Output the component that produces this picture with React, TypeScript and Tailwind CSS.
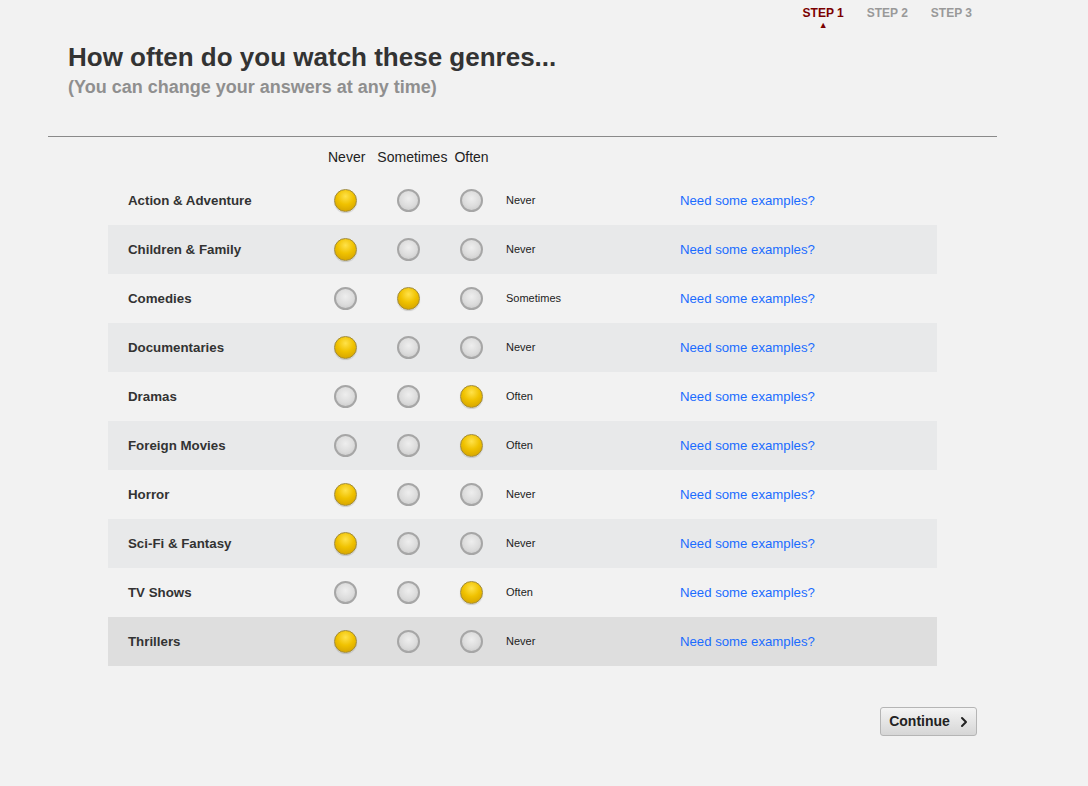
import { ChevronRight } from "lucide-react";

type Level = "Never" | "Sometimes" | "Often";

const genres: { name: string; level: Level }[] = [
	{ name: "Action & Adventure", level: "Never" },
	{ name: "Children & Family", level: "Never" },
	{ name: "Comedies", level: "Sometimes" },
	{ name: "Documentaries", level: "Never" },
	{ name: "Dramas", level: "Often" },
	{ name: "Foreign Movies", level: "Often" },
	{ name: "Horror", level: "Never" },
	{ name: "Sci-Fi & Fantasy", level: "Never" },
	{ name: "TV Shows", level: "Often" },
	{ name: "Thrillers", level: "Never" },
];

const levels: Level[] = ["Never", "Sometimes", "Often"];

function Radio({ on }: { on: boolean }) {
	return on ? (
		<span className="block h-[23px] w-[23px] rounded-full border border-[#a08a3a] bg-[radial-gradient(circle_at_50%_30%,#ffe24a_0%,#f0c200_45%,#cc9a00_100%)] shadow-[0_1px_1px_rgba(0,0,0,0.15)]" />
	) : (
		<span className="block h-[23px] w-[23px] rounded-full border-2 border-[#a6a6a6] bg-[radial-gradient(circle_at_50%_40%,#eeeeee_0%,#dcdcdc_55%,#c4c4c4_100%)]" />
	);
}

function GenreRow({ name, level, index }: { name: string; level: Level; index: number }) {
	const last = index === genres.length - 1;
	const bg = last ? "bg-[#dedede]" : index % 2 === 1 ? "bg-[#e8e9ea]" : "";
	return (
		<div className={`flex h-[49px] items-center pl-5 ${bg}`}>
			<div className="w-[206px] text-[13.3px] font-bold text-[#333]">{name}</div>
			<div className="flex gap-[40px]">
				{levels.map((l) => (
					<Radio key={l} on={l === level} />
				))}
			</div>
			<div className="ml-[23px] w-[174px] text-[11px] text-[#222]">{level}</div>
			<a href="#" className="text-[13.2px] text-[#1a6cff]">
				Need some examples?
			</a>
		</div>
	);
}

export default function App() {
	return (
		<div className="min-h-[786px] w-[1088px] bg-[#f2f2f2] font-['Liberation_Sans',Arial,sans-serif]">
			<div className="flex justify-end gap-[23px] pr-[116px] pt-[6px] text-[12px] font-bold">
				<div className="flex h-[22px] flex-col items-center">
					<span className="leading-[15px] text-[#7a0000]">STEP 1</span>
					<span className="mt-[0px] text-[9px] leading-[8px] text-[#7a0000]">▲</span>
				</div>
				<span className="leading-[15px] text-[#999]">STEP 2</span>
				<span className="leading-[15px] text-[#999]">STEP 3</span>
			</div>

			<div className="pl-[68px] pt-[14px]">
				<h1 className="text-[26px] font-bold leading-[30px] text-[#333]">
					How often do you watch these genres...
				</h1>
				<p className="mt-[5px] text-[18px] font-bold leading-[20px] text-[#8f8f8f]">
					(You can change your answers at any time)
				</p>
			</div>

			<div className="ml-[48px] mt-[39px] h-px w-[949px] bg-[#8a8a8a]" />

			<div className="flex pl-[328px] pt-[12px] text-[14px] leading-[16px] text-[#222]">
				<span>Never</span>
				<span className="ml-[12px]">Sometimes</span>
				<span className="ml-[7px]">Often</span>
			</div>

			<div className="ml-[108px] mt-[11px] w-[829px]">
				{genres.map((g, i) => (
					<GenreRow key={g.name} name={g.name} level={g.level} index={i} />
				))}
			</div>

			<div className="flex justify-end pr-[111px] pt-[41px]">
				<button
					type="button"
					className="flex h-[29px] w-[97px] items-center justify-center gap-[6px] rounded-[3px] border border-[#b5b5b5] bg-gradient-to-b from-[#f4f4f4] to-[#d6d6d6] pl-[4px] text-[14px] font-bold text-[#222]"
				>
					Continue
					<ChevronRight className="h-[16px] w-[16px]" strokeWidth={3} />
				</button>
			</div>
		</div>
	);
}
